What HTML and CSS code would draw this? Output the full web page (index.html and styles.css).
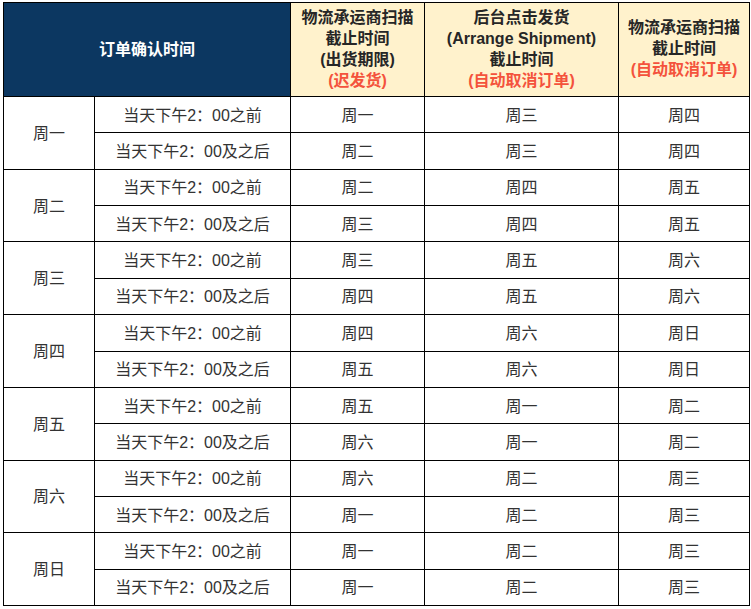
FILE: index.html
```html
<!DOCTYPE html>
<html lang="zh">
<head>
<meta charset="utf-8">
<link rel="stylesheet" href="styles.css">
</head>
<body>
<table class="sched">
  <colgroup>
    <col class="c1"><col class="c2"><col class="c3"><col class="c4"><col class="c5">
  </colgroup>
  <thead>
    <tr class="head">
      <th colspan="2" class="navy">订单确认时间</th>
      <th class="yel">物流承运商扫描<br>截止时间<br>(出货期限)<br><span class="red">(迟发货)</span></th>
      <th class="yel">后台点击发货<br>(Arrange Shipment)<br>截止时间<br><span class="red">(自动取消订单)</span></th>
      <th class="yel">物流承运商扫描<br>截止时间<br><span class="red">(自动取消订单)</span></th>
    </tr>
  </thead>
  <tbody>
    <tr><td rowspan="2">周一</td><td>当天下午2：00之前</td><td>周一</td><td>周三</td><td>周四</td></tr>
    <tr><td>当天下午2：00及之后</td><td>周二</td><td>周三</td><td>周四</td></tr>
    <tr><td rowspan="2">周二</td><td>当天下午2：00之前</td><td>周二</td><td>周四</td><td>周五</td></tr>
    <tr><td>当天下午2：00及之后</td><td>周三</td><td>周四</td><td>周五</td></tr>
    <tr><td rowspan="2">周三</td><td>当天下午2：00之前</td><td>周三</td><td>周五</td><td>周六</td></tr>
    <tr><td>当天下午2：00及之后</td><td>周四</td><td>周五</td><td>周六</td></tr>
    <tr><td rowspan="2">周四</td><td>当天下午2：00之前</td><td>周四</td><td>周六</td><td>周日</td></tr>
    <tr><td>当天下午2：00及之后</td><td>周五</td><td>周六</td><td>周日</td></tr>
    <tr><td rowspan="2">周五</td><td>当天下午2：00之前</td><td>周五</td><td>周一</td><td>周二</td></tr>
    <tr><td>当天下午2：00及之后</td><td>周六</td><td>周一</td><td>周二</td></tr>
    <tr><td rowspan="2">周六</td><td>当天下午2：00之前</td><td>周六</td><td>周二</td><td>周三</td></tr>
    <tr><td>当天下午2：00及之后</td><td>周一</td><td>周二</td><td>周三</td></tr>
    <tr><td rowspan="2">周日</td><td>当天下午2：00之前</td><td>周一</td><td>周二</td><td>周三</td></tr>
    <tr><td>当天下午2：00及之后</td><td>周一</td><td>周二</td><td>周三</td></tr>
  </tbody>
</table>
</body>
</html>
```
FILE: styles.css
```css
html, body {
  margin: 0;
  padding: 0;
  background: #ffffff;
}
body {
  padding: 2px 0 0 3px;
}
.sched {
  border-collapse: collapse;
  table-layout: fixed;
  width: 746px;
  font-family: "Liberation Sans", "Noto Sans CJK SC", sans-serif;
  font-size: 16px;
  color: #333333;
}
.c1 { width: 91px; }
.c2 { width: 196px; }
.c3 { width: 134px; }
.c4 { width: 194px; }
.c5 { width: 131px; }
.sched th, .sched td {
  border: 1px solid #000000;
  padding: 0;
  text-align: center;
  vertical-align: middle;
}
.head {
  height: 94px;
}
.sched th {
  font-weight: bold;
  line-height: 21px;
  color: #262626;
}
.sched th.navy {
  background: #0c3761;
  color: #ffffff;
}
.sched th.yel {
  background: #fff2cc;
  padding-bottom: 2px;
}
.red {
  color: #f4533c;
}
.sched tbody tr {
  height: 36.36px;
}
.sched td {
  line-height: 20px;
  padding-top: 2px;
}
```
